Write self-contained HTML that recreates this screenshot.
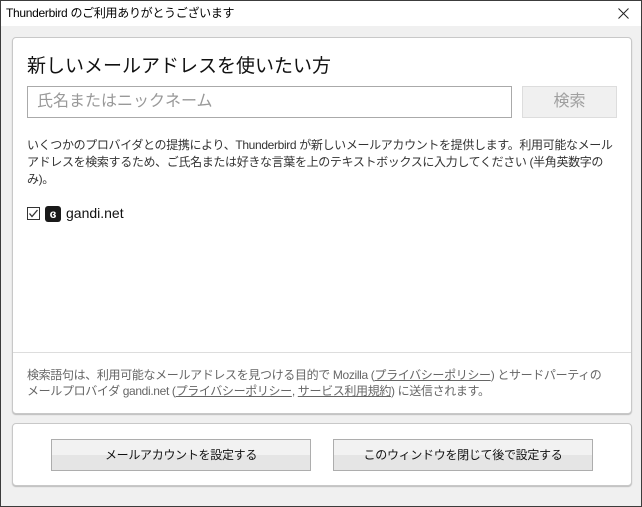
<!DOCTYPE html>
<html><head><meta charset="utf-8"><style>
*{box-sizing:border-box;margin:0;padding:0}
body{width:642px;height:507px;overflow:hidden;background:#f0f0f0;font-family:"Liberation Sans","Noto Sans CJK JP",sans-serif;position:relative}
.win{position:absolute;left:0;top:0;width:642px;height:507px;border:1px solid #3c3c3c}
.title{position:absolute;left:0;top:0;width:640px;height:25px;background:#fff;font-size:12px;color:#000;line-height:25px;padding-left:5px;letter-spacing:-0.3px}
.x{position:absolute;right:12px;top:7px}
.panel{position:absolute;background:#fff;border:1px solid #c8c8c8;border-radius:4px;box-shadow:0 1px 1px #bbb}
h1{position:absolute;left:26px;top:50px;font-size:19px;font-weight:normal;color:#111}
.inp{position:absolute;left:26px;top:85px;width:485px;height:32px;border:1px solid #aaa;background:#fff;font-size:16px;color:#999;line-height:30px;padding-left:9px}
.sb{position:absolute;left:521px;top:85px;width:95px;height:32px;border:1px solid #ddd;background:#f0f0f0;color:#a0a0a0;font-size:16px;text-align:center;line-height:30px}
.p{position:absolute;left:26px;top:136px;width:600px;font-size:12px;line-height:17px;color:#333;letter-spacing:-0.35px}
.cb{position:absolute;left:26px;top:206px;width:13px;height:13px;border:1px solid #333;background:#fff}
.ic{position:absolute;left:44px;top:205px;width:16px;height:16px;background:#1a1a1a;border-radius:3px;color:#fff;font-size:12px;text-align:center;line-height:16px;font-weight:bold}
.gl{position:absolute;left:65px;top:204px;font-size:14px;color:#111}
.sep{position:absolute;left:12px;top:351px;width:618px;height:1px;background:#ddd}
.f{position:absolute;left:26px;top:366px;width:600px;font-size:12px;line-height:16px;color:#666;letter-spacing:-0.35px}
.f u{text-decoration:underline}
.btn{position:absolute;top:438px;height:32px;border:1px solid #adadad;background:linear-gradient(#f2f2f2 50%,#e5e5e5 50%);font-size:12px;text-align:center;line-height:30px;color:#111;letter-spacing:-0.3px}
</style></head><body><div class="win">
<div class="title">Thunderbird のご利用ありがとうございます<svg class="x" width="11" height="11" viewBox="0 0 11 11"><path d="M0.5 0.5L10.5 10.5M10.5 0.5L0.5 10.5" stroke="#222" stroke-width="1"/></svg></div>
<div class="panel" style="left:11px;top:36px;width:620px;height:377px"></div>
<h1>新しいメールアドレスを使いたい方</h1>
<div class="inp">氏名またはニックネーム</div>
<div class="sb">検索</div>
<div class="p">いくつかのプロバイダとの提携により、Thunderbird が新しいメールアカウントを提供します。利用可能なメール<br>アドレスを検索するため、ご氏名または好きな言葉を上のテキストボックスに入力してください (半角英数字の<br>み)。</div>
<div class="cb"><svg width="11" height="11" viewBox="0 0 11 11" style="position:absolute;left:0;top:0"><path d="M1.5 5.5L4 8.5L9.5 2" stroke="#333" stroke-width="1.3" fill="none"/></svg></div>
<div class="ic">ɞ</div>
<div class="gl">gandi.net</div>
<div class="sep"></div>
<div class="f">検索語句は、利用可能なメールアドレスを見つける目的で Mozilla (<u>プライバシーポリシー</u>) とサードパーティの<br>メールプロバイダ gandi.net (<u>プライバシーポリシー</u>, <u>サービス利用規約</u>) に送信されます。</div>
<div class="panel" style="left:11px;top:422px;width:620px;height:63px"></div>
<div class="btn" style="left:50px;width:260px">メールアカウントを設定する</div>
<div class="btn" style="left:332px;width:260px">このウィンドウを閉じて後で設定する</div>
</div></body></html>
